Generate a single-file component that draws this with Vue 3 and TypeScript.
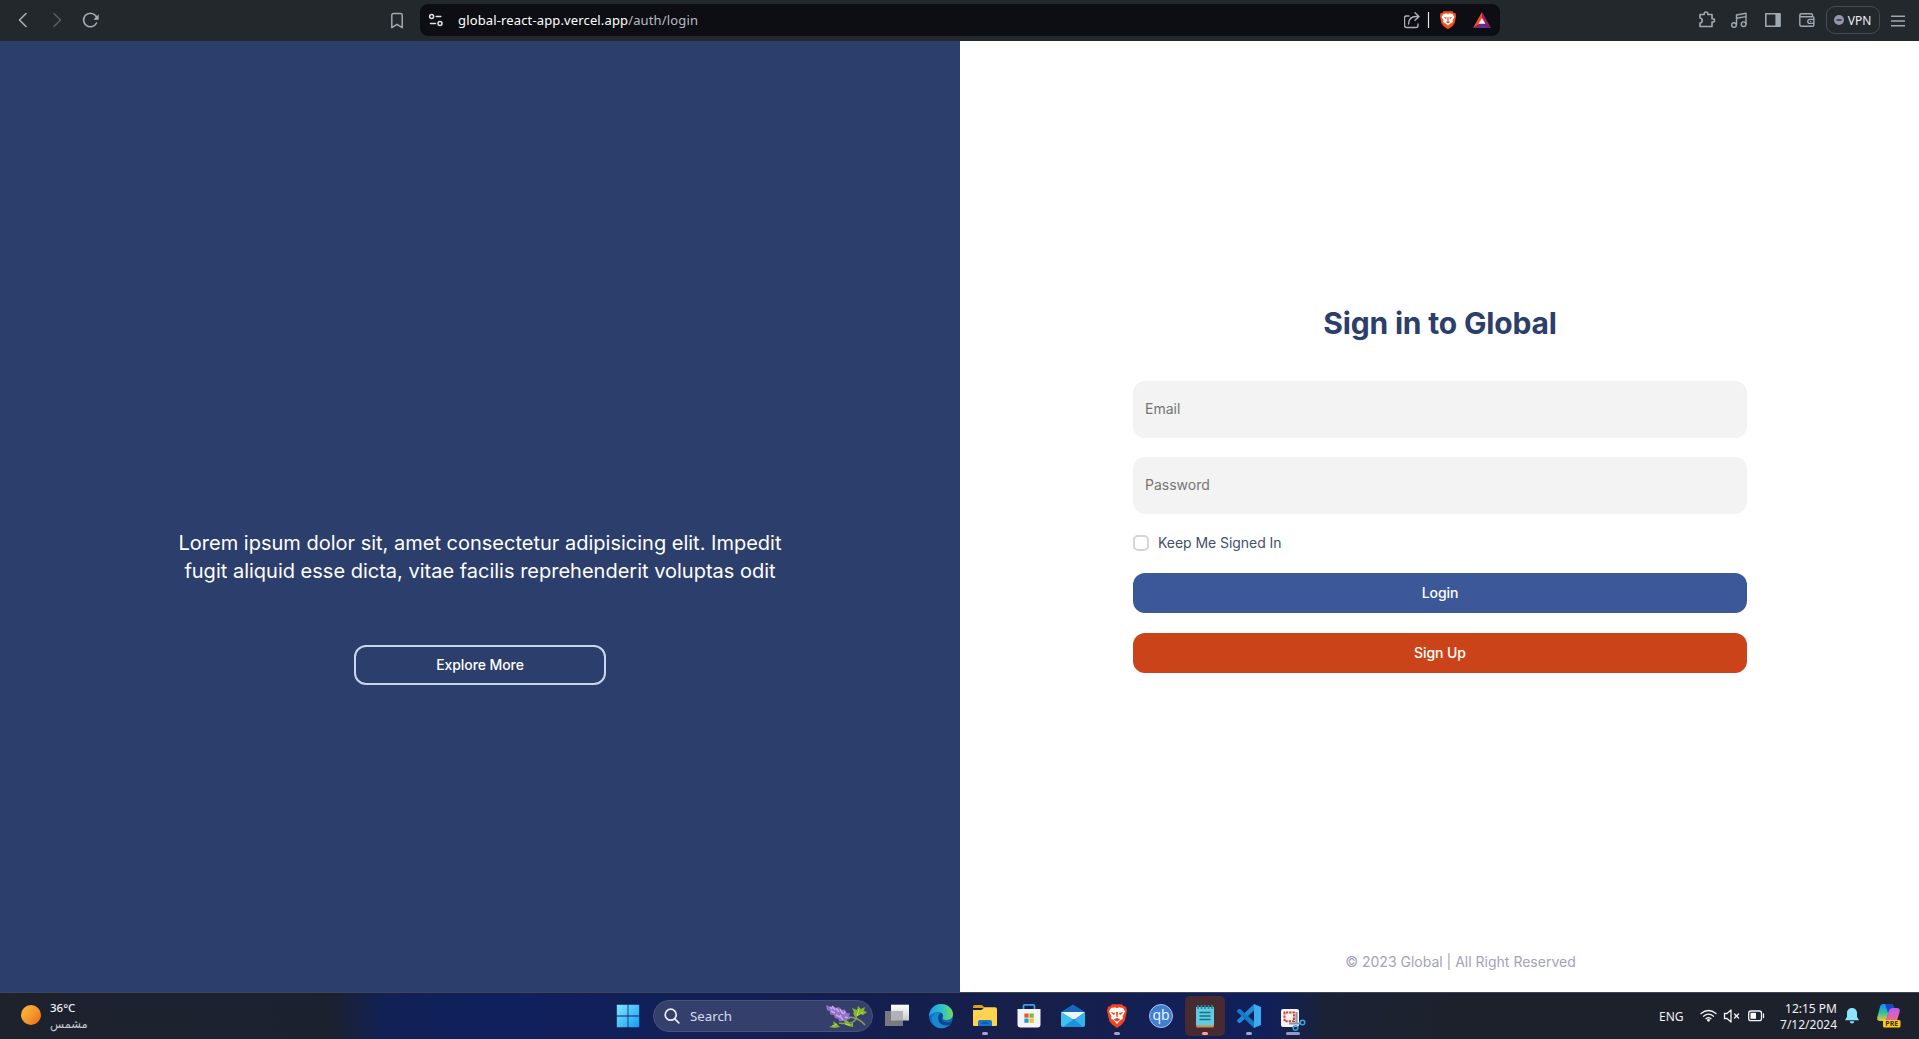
<script setup lang="ts">
import { ref } from 'vue'

const email = ref('')
const password = ref('')
const keepSignedIn = ref(false)
</script>

<template>
  <div class="screen">
    <header class="toolbar">
      <svg class="nav-icons" width="100" height="41" viewBox="0 0 100 41" fill="none" stroke-width="1.6" stroke-linecap="round" stroke-linejoin="round">
        <path d="M26 13.5 19.5 20 26 26.5" stroke="#a7aeb8" />
        <path d="M54 13.5 60.5 20 54 26.5" stroke="#555c65" />
        <path d="M96.5 23A6.8 6.8 0 1 1 95.5 15.5L97 18" stroke="#a7aeb8" />
        <path d="M98.6 14.3v5.4h-5.2Z" fill="#a7aeb8" />
      </svg>
      <svg class="bookmark" width="14" height="18" viewBox="0 0 14 18" fill="none" stroke="#a0a8b1" stroke-width="1.5" stroke-linejoin="round">
        <path d="M1.8 3.2c0-1 .7-1.7 1.7-1.7h7c1 0 1.7.7 1.7 1.7v12.5L7 12.3l-5.2 3.4Z" />
      </svg>
      <div class="address">
        <svg class="site-icon" width="16" height="14" viewBox="0 0 16 14" fill="none" stroke="#dfe2e6" stroke-width="1.5" stroke-linecap="round">
          <circle cx="3.6" cy="3.4" r="2" /><path d="M8.2 3.4h4.6M2.5 10.4h5" /><circle cx="12" cy="10.4" r="2" />
        </svg>
        <span class="url">global-react-app.vercel.app<span class="path">/auth/login</span></span>
        <svg class="address-icons" width="90" height="32" viewBox="1404 4 90 32" fill="none">
          <path d="M1409 16h-2.5q-2 0-2 2v7.5q0 2 2 2h9.500q2 0 2-2V24M1408.500 24c.2-5 2.500-7.500 7.500-7.500h2.500M1415 12.700l4 3.800-4 3.800" stroke="#abb1ba" stroke-width="1.4" stroke-linecap="round" stroke-linejoin="round" />
          <path d="M1428.500 12v16" stroke="#e3e5e8" stroke-width="1.2" />
          <path d="M1443.500 11.200h9l1.400 1.700 1.700.3 .4 3.200-1.500 7-2.500 3-4 2.800-4-2.800-2.500-3-1.500-7 .4-3.200 1.700-.3Z" fill="#f4511e" />
          <path d="m1443.500 14 3-.5 1.500.6 1.500-.6 3 .5 2 2.900-2 3.300 .3 1.800-2.300 1.400-2.500 2.200-2.500-2.200-2.300-1.400.3-1.800-2-3.300Z" fill="#fff" />
          <path d="m1443.500 17 3.200.6-.7 1.600ZM1452.500 17l-3.200.6.7 1.600ZM1447.200 17.500h1.600l-.3 3.500h-1ZM1445.700 22l2.300-1 2.300 1-2.300 1.600Z" fill="#e8562b" />
          <path d="M1482 12 1473 28l9-5.200Z" fill="#ff4724" /><path d="m1482 12 9 16-9-5.200Z" fill="#9e1f63" /><path d="M1473 28h18l-9-5.300Z" fill="#662d91" /><path d="m1482 18 3.400 5.800h-6.800Z" fill="#fff" />
        </svg>
      </div>
      <svg class="tool-icons" width="120" height="26" viewBox="1697 8 120 26" fill="none" stroke="#a0a9b2" stroke-width="1.6" stroke-linejoin="round" stroke-linecap="round">
        <path d="M1700 14.500h4.200q-.3-2.500 1.800-2.500t1.800 2.500h4.200v4.200q2.500-.2 2.500 1.700t-2.500 1.700v4.400h-12v-3.500q2.300-.4 2.300-2.500t-2.300-2.500Z" />
        <g stroke-width="1.400"><path d="M1736.500 24.500V15l9.500-1.700v10.500M1736.500 18.300l9.500-1.700" /><circle cx="1734" cy="25" r="2.300" /><circle cx="1743.600" cy="24.200" r="2.300" /></g>
        <path d="M1765.800 13.800h14v12.400h-14Z" /><path d="M1776.200 13.800h3.600v12.400h-3.600Z" fill="#a0a9b2" />
        <path stroke-width="1.400" d="M1812.500 16.700v-1.500q0-1.400-1.400-1.400h-9.700q-1.600 0-1.600 1.500 0 1.400 1.600 1.400h11.200q1.300 0 1.300 1.300v6.900q0 1.300-1.300 1.300h-10.900q-1.900 0-1.900-1.900V15.300M1813.800 19.400h-4q-2 0-2 2t2 2h4M1810.600 21.400h.1" />
      </svg>
      <button class="vpn">
        <svg width="10" height="10" viewBox="0 0 10 10"><circle cx="5" cy="5" r="5" fill="#9496aa" /><path d="M2.400 5h5.200" stroke="#292c35" stroke-width="1.4" /></svg>
        <span>VPN</span>
      </button>
      <svg class="menu" width="14" height="12" viewBox="0 0 14 12" stroke="#a0a6b3" stroke-width="1.400"><path d="M0 1.200h14M0 6h14M0 10.800h14" /></svg>
    </header>

    <main class="page">
      <section class="promo">
        <p>Lorem ipsum dolor sit, amet consectetur adipisicing elit. Impedit<br />fugit aliquid esse dicta, vitae facilis reprehenderit voluptas odit</p>
        <button class="explore">Explore More</button>
      </section>
      <section class="auth">
        <form class="form" @submit.prevent>
          <h1>Sign in to Global</h1>
          <input v-model="email" class="field" type="email" placeholder="Email" />
          <input v-model="password" class="field" type="password" placeholder="Password" />
          <label class="keep"><input v-model="keepSignedIn" type="checkbox" /><span>Keep Me Signed In</span></label>
          <button class="btn login">Login</button>
          <button class="btn signup" type="button">Sign Up</button>
        </form>
        <footer>© 2023 Global | All Right Reserved</footer>
      </section>
    </main>

    <nav class="taskbar">
      <div class="weather">
        <i class="sun"></i>
        <div><span class="temp">36°C</span><span class="sky" dir="rtl">مشمس</span></div>
      </div>
      <svg class="start" width="24" height="24" viewBox="0 0 24 24">
        <defs><linearGradient id="win" x1="0" y1="0" x2="1" y2="1"><stop stop-color="#7de8ff" /><stop offset="1" stop-color="#149cf2" /></linearGradient></defs>
        <path d="M.8.8h10.800v10.800H.8ZM12.400.8h10.800v10.800H12.400ZM.8 12.400h10.800v10.800H.8ZM12.400 12.400h10.800v10.800H12.400Z" fill="url(#win)" />
      </svg>
      <div class="search">
        <svg width="16" height="16" viewBox="0 0 16 16" fill="none" stroke="#e9ecfa" stroke-width="1.700" stroke-linecap="round"><circle cx="6.700" cy="6.700" r="5.500" /><path d="m10.800 10.800 4 4" /></svg>
        <span>Search</span>
        <svg class="flower" width="42" height="26" viewBox="0 0 42 26">
          <path d="M20 14q13-1 20 8M14 20q14 2 17-4l1-8" fill="none" stroke="#84a05b" stroke-width="1.500" />
          <path d="m1 2 5 2 2-1 3 2 3-1 2 3 4-.5 1 3 4 1-1 3 1.500 2.500-3 .5-1 2-4-.5-3 .5-1.500-3-3-.3-1-3-4-1 0-3-3-1Z" fill="#9471c8" />
          <path d="m5 4 2 2m0-3 3 4m-4 1 4 2m1-5 3 4m-3 3 4 2m0-8 3 5m-3 2 3 4m2-9-1 3m1 3 3 1m-8-3 1 1" stroke="#c8a7ed" stroke-width="1.500" />
          <path d="m30 14-2-4 1-1-2-4 5 2 1-4 3 3 4-2-1 4 3 1-4 3-3-1Z" fill="#86b72e" />
          <path d="m12 21-4-3 1 4-5 2 6 1 5-1ZM20 21l-1-4 4 1 2 3 3-1 0 4-5-1Z" fill="#80b928" />
          <path d="m32 13 2-7m-2 7 6-4M7 23l5-2m8 0 5 1" stroke="#bad84c" />
        </svg>
      </div>
      <div class="apps">
        <div class="app"><svg viewBox="0 0 24 24"><defs><linearGradient id="tv" y2="1" x2="0"><stop stop-color="#fff" /><stop offset="1" stop-color="#c9c9cd" /></linearGradient></defs><path d="M6 .7h18v15.800H6Z" fill="url(#tv)" /><path d="M0 7h18v15H0Z" fill="#777a80" /><path d="M6 7h12v9.500H6Z" fill="#b1b2b5" /></svg></div>
        <div class="app"><svg viewBox="0 0 24 24"><defs><linearGradient id="eg" x1="0" y1=".3" x2="1" y2=".3"><stop stop-color="#1c9be7" /><stop offset=".55" stop-color="#2fc2c6" /><stop offset="1" stop-color="#70de58" /></linearGradient></defs><circle cx="12" cy="12" r="12" fill="#116bba" /><path d="M0 12C1 4 6 0 12 0c7 0 12 5 12 10 0 4-3 6-7 6-2.500 0-3.700-1-3-2.500C15 8 8 5 0 12Z" fill="url(#eg)" /><path d="M10 24C3 22 1 15 4 11c2-2.500 6-3.500 8-2-4 2-4 10 2 12 3 1 6 .5 8.500-2-3 4-7 6-12.500 5Z" fill="#1689d1" /><path d="M12 9c-4 2-4 10 2 12 3 1 6 .5 8.500-2 .5-1 0-1.500-1-1-3 1-8 .5-8.500-3-.3-1.300 1.500-3 .5-5-.4-.6-1-.9-1.500-1Z" fill="#10458e" /></svg></div>
        <div class="app open"><svg viewBox="0 0 24 24"><path d="M0 3q0-2 2-2h7l3 3H0Z" fill="#dba01d" /><path d="M0 6h8.500l3-2.800H22q2 0 2 2V21q0 1-1 1H1q-1 0-1-1Z" fill="#ffd34d" /><path d="M5 22v-4q0-2 2-2h10q2 0 2 2v4Z" fill="#1676cc" /><path d="M8.500 19h7" stroke="#0e5898" stroke-width="1.500" /></svg></div>
        <div class="app"><svg viewBox="0 0 24 24"><path d="M6.500 6V2q0-1.200 1.200-1.200h8.600q1.200 0 1.200 1.200v4" fill="none" stroke="#36a3e8" stroke-width="1.800" /><path d="M.5 5h23v15.500q0 3-3 3h-17q-3 0-3-3Z" fill="#f3f4f6" /><path d="M7.400 9.500h4.200v4.200H7.400Z" fill="#ef5330" /><path d="M12.500 9.500h4.200v4.200h-4.200Z" fill="#7cba32" /><path d="M7.400 14.600h4.200v4.200H7.400Z" fill="#2397da" /><path d="M12.500 14.600h4.200v4.200h-4.200Z" fill="#fab91e" /></svg></div>
        <div class="app"><svg viewBox="0 0 24 24"><path d="m0 8 12-7.500L24 8v5H0Z" fill="#1768b8" /><path d="M0 8h24L14 15.500h-3Z" fill="#eef5fb" /><path d="m24 8v13q0 2-2 2H2L14 15Z" fill="#35b4ec" /><path d="M0 8v13q0 2 2 2h1.500L13 15.800Z" fill="#3dc1f3" /><path d="m2 23 11-8 9 8Z" fill="#1d91dc" /></svg></div>
        <div class="app open"><svg viewBox="0 0 24 24"><path d="M7 .3h10l2 2 2 .4 1 4-2.200 10-3 3.800L12 24l-4.800-3.500-3-3.800L2 6.700l1-4 2-.4Z" fill="#f5421f" /><path d="m6 4 4-.8 2 1 2-1 4 .8 2 3.500-2.500 5 .5 2-3 2L12 20l-3-3.500-3-2 .5-2L4 7.500Z" fill="#fff" /><path d="m5.500 8 4.700 1-1.200 2.200ZM18.500 8l-4.700 1 1.200 2.200ZM11 8h2l-.4 5h-1.200ZM8.700 15.500l3.300-1.700 3.300 1.700-3.300 2.200Z" fill="#f5421f" /></svg></div>
        <div class="app"><svg viewBox="0 0 24 24"><circle cx="12" cy="12" r="11.500" fill="#427fce" stroke="#9ec4ef" /><text x="12" y="16.200" text-anchor="middle" font-size="14" fill="#e6f1ff" font-family="Noto Sans, sans-serif">qb</text></svg></div>
        <div class="app open active"><svg viewBox="0 0 24 24"><path d="M3.300 20h17.400v3.500H3.300Z" fill="#df8743" /><path d="M3 3h18v18.500H3Z" fill="#63cadf" /><path d="M5 1v4M8.500 1v4M12 1v4M15.500 1v4M19 1v4" stroke="#208ba6" stroke-width="1.700" /><path d="M6.500 8.500h11M6.500 12h11M6.500 15.500h11" stroke="#176f8b" stroke-width="1.500" /></svg></div>
        <div class="app open"><svg viewBox="0 0 24 24"><path d="M17 0v6.500L3.500 18.800Q2.500 19.500 1.600 18.800L.3 17.600q-.8-.8 0-1.600Z" fill="#2089d3" /><path d="M17 24v-6.500L3.500 5.200q-1-.7-1.900 0L.3 6.400q-.8.8 0 1.600Z" fill="#147ac6" /><path d="M17 0 24 3v18l-7 3Z" fill="#3caaf0" /></svg></div>
        <div class="app open wide"><svg viewBox="0 0 24 24"><rect y="5" width="18" height="18" rx="2" fill="#f3f4f6" /><path d="M3.500 17V8.500H13v8.700H3.500" fill="none" stroke="#df3a24" stroke-width="2" stroke-dasharray="2.300 1" /><path d="m15.500 8v12M8 19.500h12" fill="none" stroke="#8797a5" stroke-width="2.200" /><circle cx="21.500" cy="18.500" r="2.300" fill="none" stroke="#37a6e0" stroke-width="1.500" /><circle cx="14.500" cy="24" r="2.300" fill="none" stroke="#37a6e0" stroke-width="1.500" /></svg></div>
      </div>
      <div class="tray">
        <span class="lang">ENG</span>
        <svg class="status" width="66" height="16" viewBox="1701 1008 66 16" fill="none" stroke="#f1f2f5" stroke-width="1.300" stroke-linecap="round" stroke-linejoin="round">
          <path d="M1702 1013.500q7.500-6 15 0M1704.500 1016.200q5-4 10 0M1707 1018.700q2.500-2 5 0" /><circle cx="1709.500" cy="1020.300" r=".8" fill="#fff" />
          <path d="M1725.500 1013.500h2.500l4-3.500v12l-4-3.500h-2.500ZM1735.500 1014l4 4m0-4-4 4" />
          <rect x="1749.700" y="1011" width="12.800" height="9.600" rx="2.200" /><path d="M1764.500 1014v3.500" /><path d="M1751.500 1012.800h5.500v6h-5.500Z" fill="#fff" stroke="none" />
        </svg>
        <div class="clock"><span>12:15 PM</span><span>7/12/2024</span></div>
        <svg class="bell" width="14" height="16" viewBox="0 0 14 16" fill="#8de4fc"><path d="M7 0c3 0 5 2.200 5 5v4l1.600 2.300c.3.500 0 1-.5 1H.9c-.5 0-.8-.5-.5-1L2 9V5c0-2.800 2-5 5-5ZM4.700 13.300h4.600Q9 15.500 7 15.500t-2.300-2.200Z" /></svg>
        <svg class="copilot" width="24" height="24" viewBox="0 0 24 24">
          <defs><linearGradient id="cpa" x1="0" y1="0" x2="0" y2="1"><stop stop-color="#168cff" /><stop offset=".5" stop-color="#2bc0a0" /><stop offset="1" stop-color="#f2c62f" /></linearGradient><linearGradient id="cpb" x1="0" y1="0" x2="0" y2="1"><stop stop-color="#b85cf3" /><stop offset="1" stop-color="#f5668d" /></linearGradient></defs>
          <path d="M6 0h8q2 0 2.500 2l.7 2H15q-2 0-2.700 2.300L10 14q-.7 3-3 3H3q-3.500 0-2.700-4L3 3q.7-3 3-3Z" fill="url(#cpa)" />
          <path d="M8 0h6q2 0 2.500 2l.7 2H15q-2 0-2.700 2.300L11 9Z" fill="#1748c8" />
          <path d="M15 4h5q3.500 0 2.600 4L20 17H9l3-10.500Q13 4 15 4Z" fill="url(#cpb)" />
          <rect x="6" y="16" width="17.500" height="7.500" rx="1.500" fill="#ffc91a" /><text x="14.800" y="22.300" text-anchor="middle" font-size="7" font-weight="700" fill="#3b3010" font-family="Noto Sans, sans-serif">PRE</text>
        </svg>
      </div>
    </nav>
  </div>
</template>

<style>
body { margin: 0; }
</style>

<style scoped>
.screen { width: 1919px; height: 1039px; display: flex; flex-direction: column; overflow: hidden; font-family: Inter, sans-serif; }
* { box-sizing: border-box; }
svg { display: block; flex: none; }
button { font-family: inherit; cursor: pointer; }

.toolbar { height: 41px; flex: none; display: flex; align-items: center; background: #23282d; font-family: "Noto Sans", sans-serif; }
.bookmark { margin-left: 290px; }
.address { width: 1080px; height: 32px; margin: 0 0 1px 16px; display: flex; align-items: center; border-radius: 8px; background: #0d0e13; padding: 0 6px 0 8px; }
.url { margin-left: 14px; font-size: 13px; letter-spacing: .14px; color: #fff; white-space: nowrap; }
.path { color: #b8bbc0; }
.address-icons { margin-left: auto; }
.tool-icons { margin-left: 197px; }
.vpn { width: 54px; height: 28px; margin: 0 0 1px 9px; padding: 0 1px 0 0; display: flex; align-items: center; justify-content: center; gap: 4px; border: 1px solid #454a54; border-radius: 9px; background: transparent; color: #eceef3; font-size: 12px; }
.menu { margin-left: 11px; }

.page { height: 951px; display: flex; flex: none; }
.promo { width: 960px; display: flex; flex-direction: column; align-items: center; background: #2c3e6b; color: #fff; }
.promo p { margin: 488px 0 0; text-align: center; font-size: 20px; line-height: 28px; white-space: nowrap; }
.explore { width: 252px; height: 40px; margin-top: 60px; padding-bottom: 2px; border: 2px solid #c9d7ec; border-radius: 12px; background: transparent; color: #fff; font-size: 14px; font-weight: 500; letter-spacing: -.08px; }
.auth { flex: 1; display: flex; flex-direction: column; background: #fff; padding: 0 172px 0 173px; }
.form { display: flex; flex-direction: column; }
h1 { margin: 264px 0 40px; text-align: center; font-size: 30px; line-height: 36px; font-weight: 700; letter-spacing: -.18px; color: #2c3e6b; }
.field { height: 57px; margin-bottom: 19px; border: 0; border-radius: 12px; background: #f3f3f3; padding: 0 12px 2px; font: 14px Inter, sans-serif; }
.field::placeholder { color: #757575; }
.keep { height: 20px; display: flex; align-items: center; gap: 9px; font-size: 14px; letter-spacing: -.05px; color: #44506b; }
.keep span { margin-bottom: 1px; }
.keep input { appearance: none; width: 16px; height: 16px; margin: 0; border: 2px solid #d5d5d7; border-radius: 5px; }
.btn { height: 40px; padding-bottom: 2px; border: 0; border-radius: 12px; color: #fff; font-size: 14px; font-weight: 500; letter-spacing: -.08px; }
.login { margin-top: 20px; background: #3c5898; }
.signup { margin-top: 20px; background: #cb4419; }
footer { margin: auto 0 20px 41px; text-align: center; font-size: 14px; line-height: 20px; color: #a2a3b7; }

.taskbar { height: 47px; flex: none; display: flex; align-items: center; border-top: 1px solid #3f4659; background: linear-gradient(90deg, #1d222d 0, #1b212f 330px, #112155 385px, #10205d 500px, #131f52 820px, #171f49 1030px, #121f58 1210px, #111f59 1270px, #1b2234 1330px, #1d212c 1450px); color: #f1f2f6; font-family: "Noto Sans", "DejaVu Sans", sans-serif; }
.weather { width: 616px; display: flex; align-items: center; padding-left: 21px; gap: 9px; }
.weather div { display: flex; flex-direction: column; align-items: flex-start; font-size: 12px; line-height: 16px; }
.temp { font-size: 11.500px; font-weight: 500; }
.sun { width: 20px; height: 20px; margin-bottom: 3px; border-radius: 50%; background: linear-gradient(130deg, #f5bf3d, #f39129 60%, #f15e18); }
.sky { font-size: 11.500px; color: #c4c8d0; }
.search { width: 220px; height: 32px; margin: 0 0 0 13px; display: flex; align-items: center; border: 1px solid #48517e; border-radius: 16px; background: #353f6b; padding: 0 5px 0 10px; color: #d7dcf1; font-size: 13.300px; }
.search span { margin-left: 10px; }
.flower { margin-left: auto; }
.apps { display: flex; margin-left: 4px; gap: 4px; }
.app { position: relative; width: 40px; height: 40px; padding: 8px; border-radius: 5px; }
.app svg { width: 24px; height: 24px; overflow: visible; }
.active { background: #482a31; }
.open::after { content: ""; position: absolute; left: 17px; bottom: 1px; width: 6px; height: 3px; border-radius: 2px; background: #a8a5c2; }
.active::after { background: #f2a4a6; }
.wide::after { left: 13px; width: 14px; background: #9599c8; }
.tray { flex: 1; height: 46px; display: flex; align-items: center; padding-left: 346px; font-size: 12px; white-space: nowrap; }
.lang { width: 41px; margin-top: 1px; }
.clock { width: 71px; display: flex; flex-direction: column; align-items: flex-end; padding-top: 1px; line-height: 16px; }
.bell { margin-left: 8px; }
.copilot { margin-left: 18px; }
</style>
